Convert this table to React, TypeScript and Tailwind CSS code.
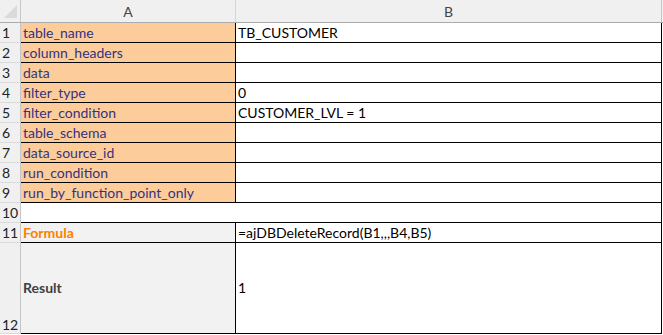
const rows = [
  { n: '1', a: 'table_name', b: 'TB_CUSTOMER' },
  { n: '2', a: 'column_headers', b: '' },
  { n: '3', a: 'data', b: '' },
  { n: '4', a: 'filter_type', b: '0' },
  { n: '5', a: 'filter_condition', b: 'CUSTOMER_LVL = 1' },
  { n: '6', a: 'table_schema', b: '' },
  { n: '7', a: 'data_source_id', b: '' },
  { n: '8', a: 'run_condition', b: '' },
  { n: '9', a: 'run_by_function_point_only', b: '' },
];

const font = { fontFamily: 'Lato, "Open Sans", sans-serif' };

function RowNum({ n, tall }: { n: string; tall?: boolean }) {
  return (
    <div
      className={`w-[21px] shrink-0 bg-[#f0f0f0] border-r border-b border-r-[#c6c6c6] border-b-[#dadada] text-[#222] pl-[2px] flex ${
        tall ? 'items-end pb-[1px]' : 'items-center'
      }`}
    >
      {n}
    </div>
  );
}

export default function App() {
  return (
    <div className="w-[663px] h-[335px] bg-white text-[14px] leading-none overflow-hidden" style={font}>
      {/* column headers */}
      <div className="flex h-[23px] bg-[#f0f0f0] border-b border-[#ababab]">
        <div className="w-[21px] shrink-0 border-r border-[#c6c6c6] flex items-end justify-end pr-[3px] pb-[4px]">
          <svg width="13" height="13" viewBox="0 0 13 13">
            <polygon points="13,0 13,13 0,13" fill="#dadada" />
          </svg>
        </div>
        <div className="w-[215px] shrink-0 border-r border-[#d4d4d4] flex items-center justify-center text-[#444] pt-[2px]">
          A
        </div>
        <div className="w-[426px] shrink-0 border-r border-[#c6c6c6] flex items-center justify-center text-[#444] pt-[2px]">
          B
        </div>
      </div>

      {rows.map(r => (
        <div key={r.n} className="flex h-[20px]">
          <RowNum n={r.n} />
          <div className="w-[215px] shrink-0 bg-[#fdcc9b] border-r border-b border-black text-[#33337f] pl-[2px] flex items-center">
            {r.a}
          </div>
          <div className="w-[426px] shrink-0 border-r border-b border-black text-black pl-[2px] flex items-center">
            {r.b}
          </div>
        </div>
      ))}

      {/* row 10 */}
      <div className="flex h-[20px]">
        <RowNum n="10" />
        <div className="w-[641px] shrink-0 border-r border-b border-black" />
      </div>

      {/* row 11 */}
      <div className="flex h-[20px]">
        <RowNum n="11" />
        <div className="w-[215px] shrink-0 bg-[#f2f2f2] border-r border-b border-black text-[#ff7f00] font-bold pl-[2px] flex items-center">
          Formula
        </div>
        <div className="w-[426px] shrink-0 border-r border-b border-black text-black pl-[2px] flex items-center">
          =ajDBDeleteRecord(B1,,,B4,B5)
        </div>
      </div>

      {/* row 12 */}
      <div className="flex h-[91px]">
        <RowNum n="12" tall />
        <div className="w-[215px] shrink-0 bg-[#f2f2f2] border-r border-b border-black text-[#404040] font-bold pl-[2px] flex items-center">
          Result
        </div>
        <div className="w-[426px] shrink-0 border-r border-b border-black text-black pl-[2px] flex items-center">
          1
        </div>
      </div>
    </div>
  );
}
